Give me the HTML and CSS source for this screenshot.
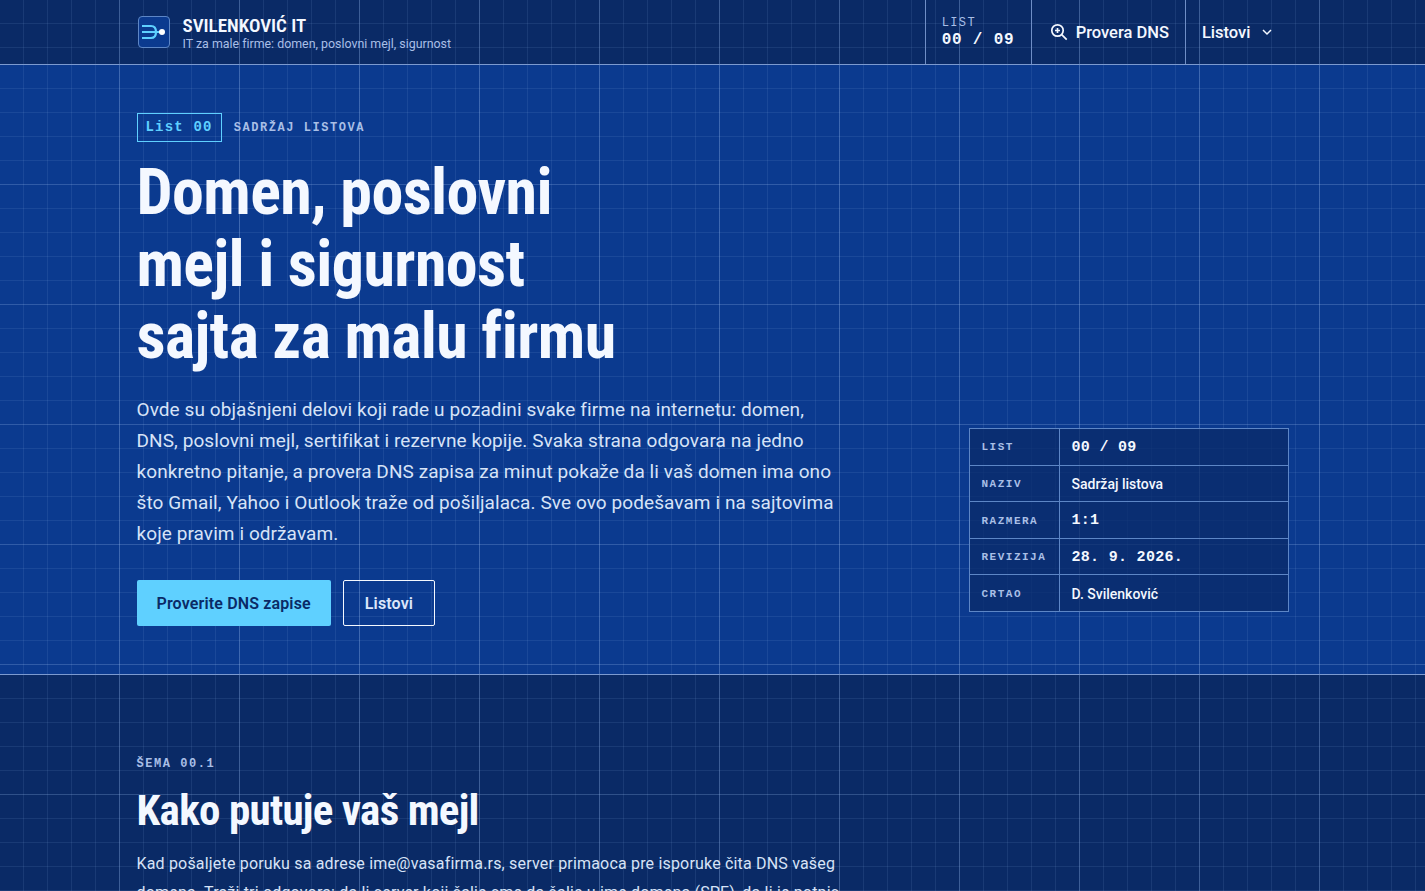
FILE: index.html
```html
<!DOCTYPE html>
<html lang="sr">
	<head>
		<meta charset="utf-8">
		<title>Svilenković IT</title>
		<link rel="stylesheet" href="styles.css">
	</head>
	<body>
		<header class="topbar">
			<div class="wrap topbar-inner">
				<a class="brand" href="#">
					<svg class="brand-mark" viewBox="0 0 32 32" width="32" height="32" aria-hidden="true">
						<rect x="0.5" y="0.5" width="31" height="31" rx="3.5" fill="#0b3a8f" stroke="#5d86c6"/>
						<path d="M4 10h9c3.500 0 5 2.500 5 6s-1.500 6-5 6H4M4 16h17" fill="none" stroke="#5fd0ff" stroke-width="2.200"/>
						<circle cx="24" cy="16" r="3" fill="#fff"/>
					</svg>
					<span class="brand-text">
						<span class="brand-name">SVILENKOVIĆ IT</span>
						<span class="brand-sub">IT za male firme: domen, poslovni mejl, sigurnost</span>
					</span>
				</a>
				<nav class="topnav">
					<div class="sheet-no">
						<span class="sheet-label">LIST</span>
						<span class="sheet-value">00 / 09</span>
					</div>
					<a class="topnav-link" href="#">
						<svg class="lens" viewBox="0 0 18 18" width="18" height="18" aria-hidden="true"><circle cx="7.500" cy="7.500" r="5.700" fill="none" stroke="currentColor" stroke-width="1.700"/><path d="M7.500 5v5M5 7.500h5M11.700 11.700l5 5" fill="none" stroke="currentColor" stroke-width="1.700"/></svg>
						Provera DNS
					</a>
					<a class="topnav-link" href="#">
						Listovi
						<svg class="chevron" viewBox="0 0 12 12" width="12" height="12" aria-hidden="true"><path d="M2 4l4 4 4-4" fill="none" stroke="currentColor" stroke-width="1.500"/></svg>
					</a>
				</nav>
			</div>
		</header>

		<section class="hero grid-bg">
			<div class="wrap hero-inner">
				<div class="hero-copy">
					<div class="eyebrow">
						<span class="tag">List 00</span>
						<span class="eyebrow-text">SADRŽAJ LISTOVA</span>
					</div>
					<h1>Domen, poslovni<br>mejl i sigurnost<br>sajta za malu firmu</h1>
					<p class="lead">Ovde su objašnjeni delovi koji rade u pozadini svake firme na internetu: domen, DNS, poslovni mejl, sertifikat i rezervne kopije. Svaka strana odgovara na jedno konkretno pitanje, a provera DNS zapisa za minut pokaže da li vaš domen ima ono što Gmail, Yahoo i Outlook traže od pošiljalaca. Sve ovo podešavam i na sajtovima koje pravim i održavam.</p>
					<div class="actions">
						<a class="btn btn-primary" href="#">Proverite DNS zapise</a>
						<a class="btn btn-ghost" href="#">Listovi</a>
					</div>
				</div>
				<table class="title-block">
					<tr><th>LIST</th><td class="mono">00 / 09</td></tr>
					<tr><th>NAZIV</th><td>Sadržaj listova</td></tr>
					<tr><th>RAZMERA</th><td class="mono">1:1</td></tr>
					<tr><th>REVIZIJA</th><td class="mono">28. 9. 2026.</td></tr>
					<tr><th>CRTAO</th><td>D. Svilenković</td></tr>
				</table>
			</div>
		</section>

		<section class="schema grid-bg">
			<div class="wrap">
				<div class="schema-label">ŠEMA 00.1</div>
				<h2>Kako putuje vaš mejl</h2>
				<p class="schema-text">Kad pošaljete poruku sa adrese ime@vasafirma.rs, server primaoca pre isporuke čita DNS vašeg domena. Traži tri odgovora: da li server koji šalje sme da šalje u ime domena (SPF), da li je potpis poruke ispravan (DKIM) i šta da radi ako provera ne uspe (DMARC).</p>
			</div>
		</section>
	</body>
</html>
```

FILE: styles.css
```css
* {
	box-sizing: border-box;
}

html,
body {
	height: 891px;
	overflow: hidden;
}

body {
	margin: 0;
	background: #0a2a66;
	color: #f4f8ff;
	font-family: Roboto, "Noto Sans", sans-serif;
	font-variant-ligatures: none;
}

a {
	color: inherit;
	text-decoration: none;
}

.wrap {
	width: 1200px;
	margin: 0 auto;
	padding: 0 24px;
}

/* blueprint paper: fine 24px lines, stronger every 120px */
.grid-bg,
.topbar {
	background-image:
		linear-gradient(to right, transparent 119px, rgba(160, 195, 245, .26) 119px),
		linear-gradient(to bottom, transparent 119px, rgba(160, 195, 245, .16) 119px),
		linear-gradient(to right, transparent 23px, rgba(160, 195, 245, .1) 23px),
		linear-gradient(to bottom, transparent 23px, rgba(160, 195, 245, .1) 23px);
	background-size: 120px 120px, 120px 120px, 24px 24px, 24px 24px;
}

.topbar {
	height: 65px;
	background-color: #0a2a66;
	border-bottom: 1px solid #7c9ad0;
}

.topbar-inner {
	display: flex;
	justify-content: space-between;
	height: 64px;
}

.brand {
	display: flex;
	align-items: center;
	gap: 12px;
	margin-left: 1px;
}

.brand-mark {
	display: block;
}

.brand-text {
	display: flex;
	flex-direction: column;
	margin-top: 2px;
	padding-left: 1px;
}

.brand-name {
	font-family: "Roboto Condensed", "Liberation Sans Narrow", Roboto, sans-serif;
	font-stretch: condensed;
	font-size: 19px;
	font-weight: 600;
	line-height: 20px;
}

.brand-sub {
	font-size: 12.4px;
	line-height: 15px;
	color: #a9bfe6;
}

.topnav {
	display: flex;
	align-items: stretch;
}

.sheet-no {
	display: flex;
	flex-direction: column;
	justify-content: center;
	width: 107px;
	padding: 2px 0 0 16px;
	border-left: 1px solid #6f8ec6;
	border-right: 1px solid #6f8ec6;
	font-family: "Liberation Mono", monospace;
}

.sheet-label {
	font-size: 12px;
	line-height: 13px;
	letter-spacing: 1.4px;
	color: #a9bfe6;
}

.sheet-value {
	font-size: 16px;
	line-height: 20px;
	font-weight: 700;
	letter-spacing: .8px;
}

.topnav-link {
	display: flex;
	align-items: center;
	gap: 8px;
	padding: 0 16px;
	font-size: 16.5px;
	font-weight: 500;
}

.topnav-link + .topnav-link {
	border-left: 1px solid #6f8ec6;
}

.lens {
	margin-left: 2px;
}

.chevron {
	margin-left: 2px;
}

.hero {
	height: 610px;
	background-color: #0b3a8f;
	border-bottom: 1px solid #7c9ad0;
}

.hero-inner {
	display: flex;
	justify-content: space-between;
	align-items: flex-end;
	height: 100%;
	padding-top: 48px;
	padding-bottom: 48px;
}

.hero-copy {
	width: 704px;
}

.eyebrow {
	display: flex;
	align-items: center;
	gap: 12px;
}

.tag {
	height: 29px;
	padding: 0 8px;
	line-height: 26px;
	border: 1px solid #5fd0ff;
	color: #5fd0ff;
	font-family: "Liberation Mono", monospace;
	font-size: 14px;
	font-weight: 700;
	letter-spacing: 1.2px;
}

.eyebrow-text {
	font-family: "Liberation Mono", monospace;
	font-size: 12px;
	font-weight: 700;
	letter-spacing: 1.55px;
	color: #a9bfe6;
}

h1 {
	margin: 15px 0 0;
	font-family: "Roboto Condensed", "Liberation Sans Narrow", Roboto, sans-serif;
	font-stretch: condensed;
	font-size: 64px;
	font-weight: 700;
	line-height: 72px;
	letter-spacing: -.6px;
}

.lead {
	margin: 21px 0 0;
	font-size: 19px;
	line-height: 31px;
	letter-spacing: .08px;
	color: #d7e3f7;
}

.actions {
	display: flex;
	gap: 12px;
	margin-top: 31px;
}

.btn {
	display: flex;
	align-items: center;
	height: 46px;
	border-radius: 2px;
	font-size: 16px;
	font-weight: 600;
	letter-spacing: .15px;
}

.btn-primary {
	padding: 0 20px;
	background: #5fd0ff;
	color: #0a2a66;
}

.btn-ghost {
	padding: 0 21px;
	border: 1px solid #f4f8ff;
	color: #dbe6fa;
}

.title-block {
	width: 320px;
	margin-bottom: 14px;
	border-collapse: collapse;
	background: rgba(10, 42, 102, .72);
}

.title-block th,
.title-block td {
	height: 36.6px;
	padding: 1px 12px 0;
	border: 1px solid #5d86c6;
	text-align: left;
}

.title-block th {
	width: 90px;
	font-family: "Liberation Mono", monospace;
	font-size: 11px;
	font-weight: 700;
	letter-spacing: 1.5px;
	color: #a9bfe6;
}

.title-block td {
	font-size: 14px;
	font-weight: 500;
}

.title-block .mono {
	font-family: "Liberation Mono", monospace;
	font-size: 15px;
	font-weight: 700;
	letter-spacing: .3px;
}

.schema {
	padding-top: 81px;
}

.schema-label {
	font-family: "Liberation Mono", monospace;
	font-size: 12px;
	font-weight: 700;
	line-height: 16px;
	letter-spacing: 1.55px;
	color: #a9bfe6;
}

h2 {
	margin: 14px 0 0;
	font-family: "Roboto Condensed", "Liberation Sans Narrow", Roboto, sans-serif;
	font-stretch: condensed;
	font-size: 43px;
	font-weight: 700;
	line-height: 48px;
	letter-spacing: -.7px;
}

.schema-text {
	width: 704px;
	margin: 15px 0 0;
	font-size: 16px;
	line-height: 29px;
	letter-spacing: .18px;
	color: #d7e3f7;
}
```
